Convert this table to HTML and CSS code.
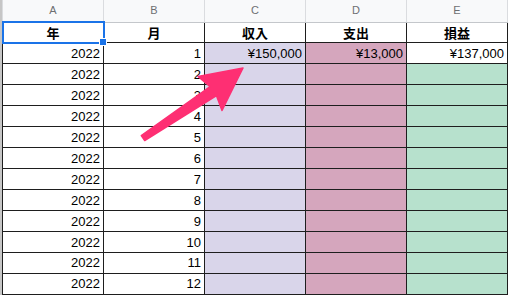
FILE: index.html
```html
<!DOCTYPE html>
<html lang="ja">
<head>
<meta charset="utf-8">
<link rel="stylesheet" href="styles.css">
</head>
<body>
<div class="sheet">
  <div class="gutter"></div>
  <table class="grid">
    <tr class="letters">
      <th>A</th><th>B</th><th>C</th><th>D</th><th>E</th>
    </tr>
    <tr class="head">
      <td class="sel">年<span class="handle"></span></td><td>月</td><td>収入</td><td>支出</td><td>損益</td>
    </tr>
    <tr>
      <td>2022</td><td>1</td><td class="inc">¥150,000</td><td class="exp">¥13,000</td><td>¥137,000</td>
    </tr>
    <tr><td>2022</td><td>2</td><td class="inc"></td><td class="exp"></td><td class="pl"></td></tr>
    <tr><td>2022</td><td>3</td><td class="inc"></td><td class="exp"></td><td class="pl"></td></tr>
    <tr><td>2022</td><td>4</td><td class="inc"></td><td class="exp"></td><td class="pl"></td></tr>
    <tr><td>2022</td><td>5</td><td class="inc"></td><td class="exp"></td><td class="pl"></td></tr>
    <tr><td>2022</td><td>6</td><td class="inc"></td><td class="exp"></td><td class="pl"></td></tr>
    <tr><td>2022</td><td>7</td><td class="inc"></td><td class="exp"></td><td class="pl"></td></tr>
    <tr><td>2022</td><td>8</td><td class="inc"></td><td class="exp"></td><td class="pl"></td></tr>
    <tr><td>2022</td><td>9</td><td class="inc"></td><td class="exp"></td><td class="pl"></td></tr>
    <tr><td>2022</td><td>10</td><td class="inc"></td><td class="exp"></td><td class="pl"></td></tr>
    <tr><td>2022</td><td>11</td><td class="inc"></td><td class="exp"></td><td class="pl"></td></tr>
    <tr><td>2022</td><td>12</td><td class="inc"></td><td class="exp"></td><td class="pl"></td></tr>
  </table>
  <svg class="arrow" width="510" height="295" viewBox="0 0 510 295">
    <polygon points="141.3,135.5 210.1,86.7 198,76.5 243,68 222,110.5 216.5,95.7 144.7,140.5" fill="#fe2f73" stroke="#fe2f73" stroke-width="1.5" stroke-linejoin="round"/>
  </svg>
</div>
</body>
</html>
```
FILE: styles.css
```css
html, body {
  margin: 0;
  padding: 0;
  background: #ffffff;
}
.sheet {
  position: relative;
  display: flex;
  width: 510px;
  height: 295px;
  overflow: hidden;
}
.gutter {
  width: 2px;
  flex: none;
  background: #c6c6c6;
}
.grid {
  border-collapse: collapse;
  table-layout: fixed;
  font-family: "Liberation Sans", Arial, "Noto Sans CJK JP", sans-serif;
  font-size: 13px;
  color: #000;
}
.grid th, .grid td {
  width: 101px;
  height: 20px;
  padding: 0 3px 0 0;
  box-sizing: border-box;
  border: 1px solid #1e1e1e;
  text-align: right;
  white-space: nowrap;
  line-height: 19px;
}
.letters th {
  background: #f8f9fa;
  border: 1px solid #dadcdf;
  border-top: none;
  border-bottom: 1px solid #c4c7cb;
  color: #6d6f72;
  font-weight: normal;
  font-size: 11px;
  text-align: center;
  padding: 0;
  height: 21px;
}
.head td {
  text-align: center;
  font-weight: bold;
  font-family: "Noto Sans CJK JP", sans-serif;
  font-size: 13px;
  padding: 0;
}
.sel {
  position: relative;
  outline: 2px solid #1a73e8;
  outline-offset: -1px;
}
.handle {
  position: absolute;
  right: -4px;
  bottom: -4px;
  width: 6px;
  height: 6px;
  background: #1a73e8;
  border: 1px solid #ffffff;
  box-sizing: content-box;
  z-index: 2;
}
.inc { background: #d9d5ea; }
.exp { background: #d5a6bd; }
.pl  { background: #b7e1cd; }
.arrow {
  position: absolute;
  left: 0;
  top: 0;
  pointer-events: none;
}
```
